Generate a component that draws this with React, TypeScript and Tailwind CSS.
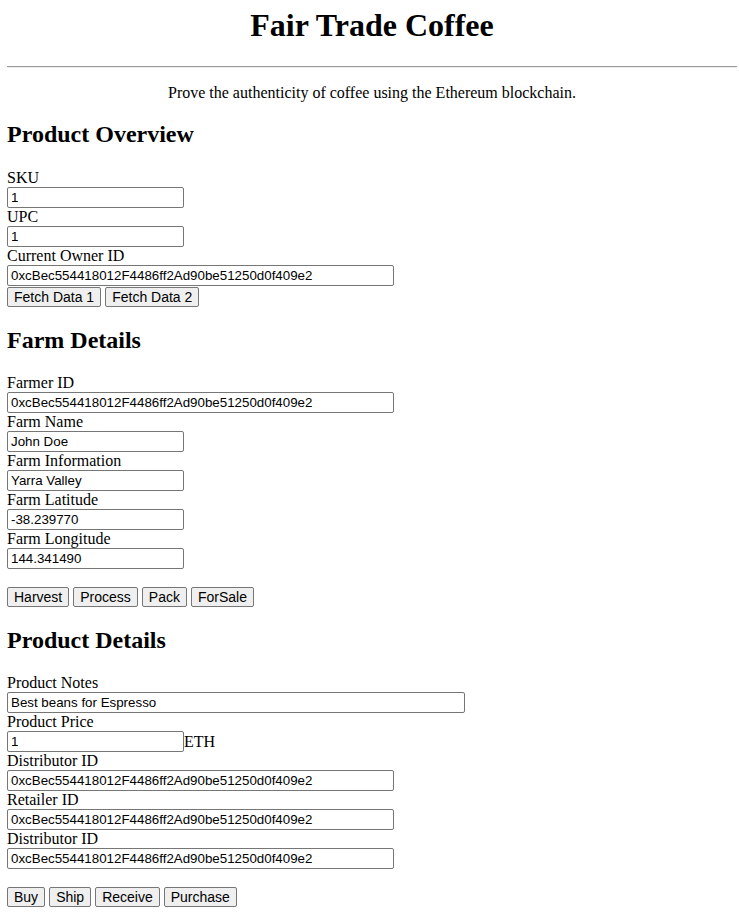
import React from "react";

const ADDR = "0xcBec554418012F4486ff2Ad90be51250d0f409e2";

function Field({
  label,
  value,
  w,
  suffix,
}: {
  label: string;
  value: string;
  w: "short" | "long" | "notes";
  suffix?: string;
}) {
  const width =
    w === "short" ? "w-[177px]" : w === "long" ? "w-[387px]" : "w-[458px]";
  return (
    <div className="flex flex-col">
      <div className="h-[18px] leading-[18px] text-[16px]">{label}</div>
      <div className="flex items-center h-[21px]">
        <input
          readOnly
          value={value}
          className={`${width} h-[21px] border border-[#767676] rounded-[2px] pl-[3px] pr-[2px] text-[13.33px] leading-[15px] text-black bg-white font-['Liberation_Sans',Arial,sans-serif] outline-none`}
        />
        {suffix && <span className="text-[16px] leading-[18px]">{suffix}</span>}
      </div>
    </div>
  );
}

function Btn({ children }: { children: React.ReactNode }) {
  return (
    <button className="h-[20px] px-[6px] border border-[#767676] rounded-[2px] bg-[#efefef] text-[14px] leading-[16px] text-black font-['Liberation_Sans',Arial,sans-serif]">
      {children}
    </button>
  );
}

export default function App() {
  return (
    <div className="min-h-[915px] bg-white text-black font-['Liberation_Serif','Times_New_Roman',serif] pl-[7px] pr-[2px] pt-[7px]">
      <h1 className="text-[32px] font-bold leading-[37px] text-center">
        Fair Trade Coffee
      </h1>
      <div className="mt-[22px] h-[2px] border-t border-b border-t-[#9a9a9a] border-b-[#eeeeee]" />
      <p className="mt-[16px] text-[16px] leading-[18px] text-center">
        Prove the authenticity of coffee using the Ethereum blockchain.
      </p>

      <h2 className="mt-[19px] text-[24px] font-bold leading-[27px]">
        Product Overview
      </h2>
      <div className="mt-[21px]">
        <Field label="SKU" value="1" w="short" />
        <Field label="UPC" value="1" w="short" />
        <Field label="Current Owner ID" value={ADDR} w="long" />
      </div>
      <div className="mt-[1px] flex gap-[4px]">
        <Btn>Fetch Data 1</Btn>
        <Btn>Fetch Data 2</Btn>
      </div>

      <h2 className="mt-[20px] text-[24px] font-bold leading-[27px]">
        Farm Details
      </h2>
      <div className="mt-[20px]">
        <Field label="Farmer ID" value={ADDR} w="long" />
        <Field label="Farm Name" value="John Doe" w="short" />
        <Field label="Farm Information" value="Yarra Valley" w="short" />
        <Field label="Farm Latitude" value="-38.239770" w="short" />
        <Field label="Farm Longitude" value="144.341490" w="short" />
      </div>
      <div className="mt-[18px] flex gap-[4px]">
        <Btn>Harvest</Btn>
        <Btn>Process</Btn>
        <Btn>Pack</Btn>
        <Btn>ForSale</Btn>
      </div>

      <h2 className="mt-[20px] text-[24px] font-bold leading-[27px]">
        Product Details
      </h2>
      <div className="mt-[20px]">
        <Field label="Product Notes" value="Best beans for Espresso" w="notes" />
        <Field label="Product Price" value="1" w="short" suffix="ETH" />
        <Field label="Distributor ID" value={ADDR} w="long" />
        <Field label="Retailer ID" value={ADDR} w="long" />
        <Field label="Distributor ID" value={ADDR} w="long" />
      </div>
      <div className="mt-[18px] flex gap-[4px]">
        <Btn>Buy</Btn>
        <Btn>Ship</Btn>
        <Btn>Receive</Btn>
        <Btn>Purchase</Btn>
      </div>
    </div>
  );
}
